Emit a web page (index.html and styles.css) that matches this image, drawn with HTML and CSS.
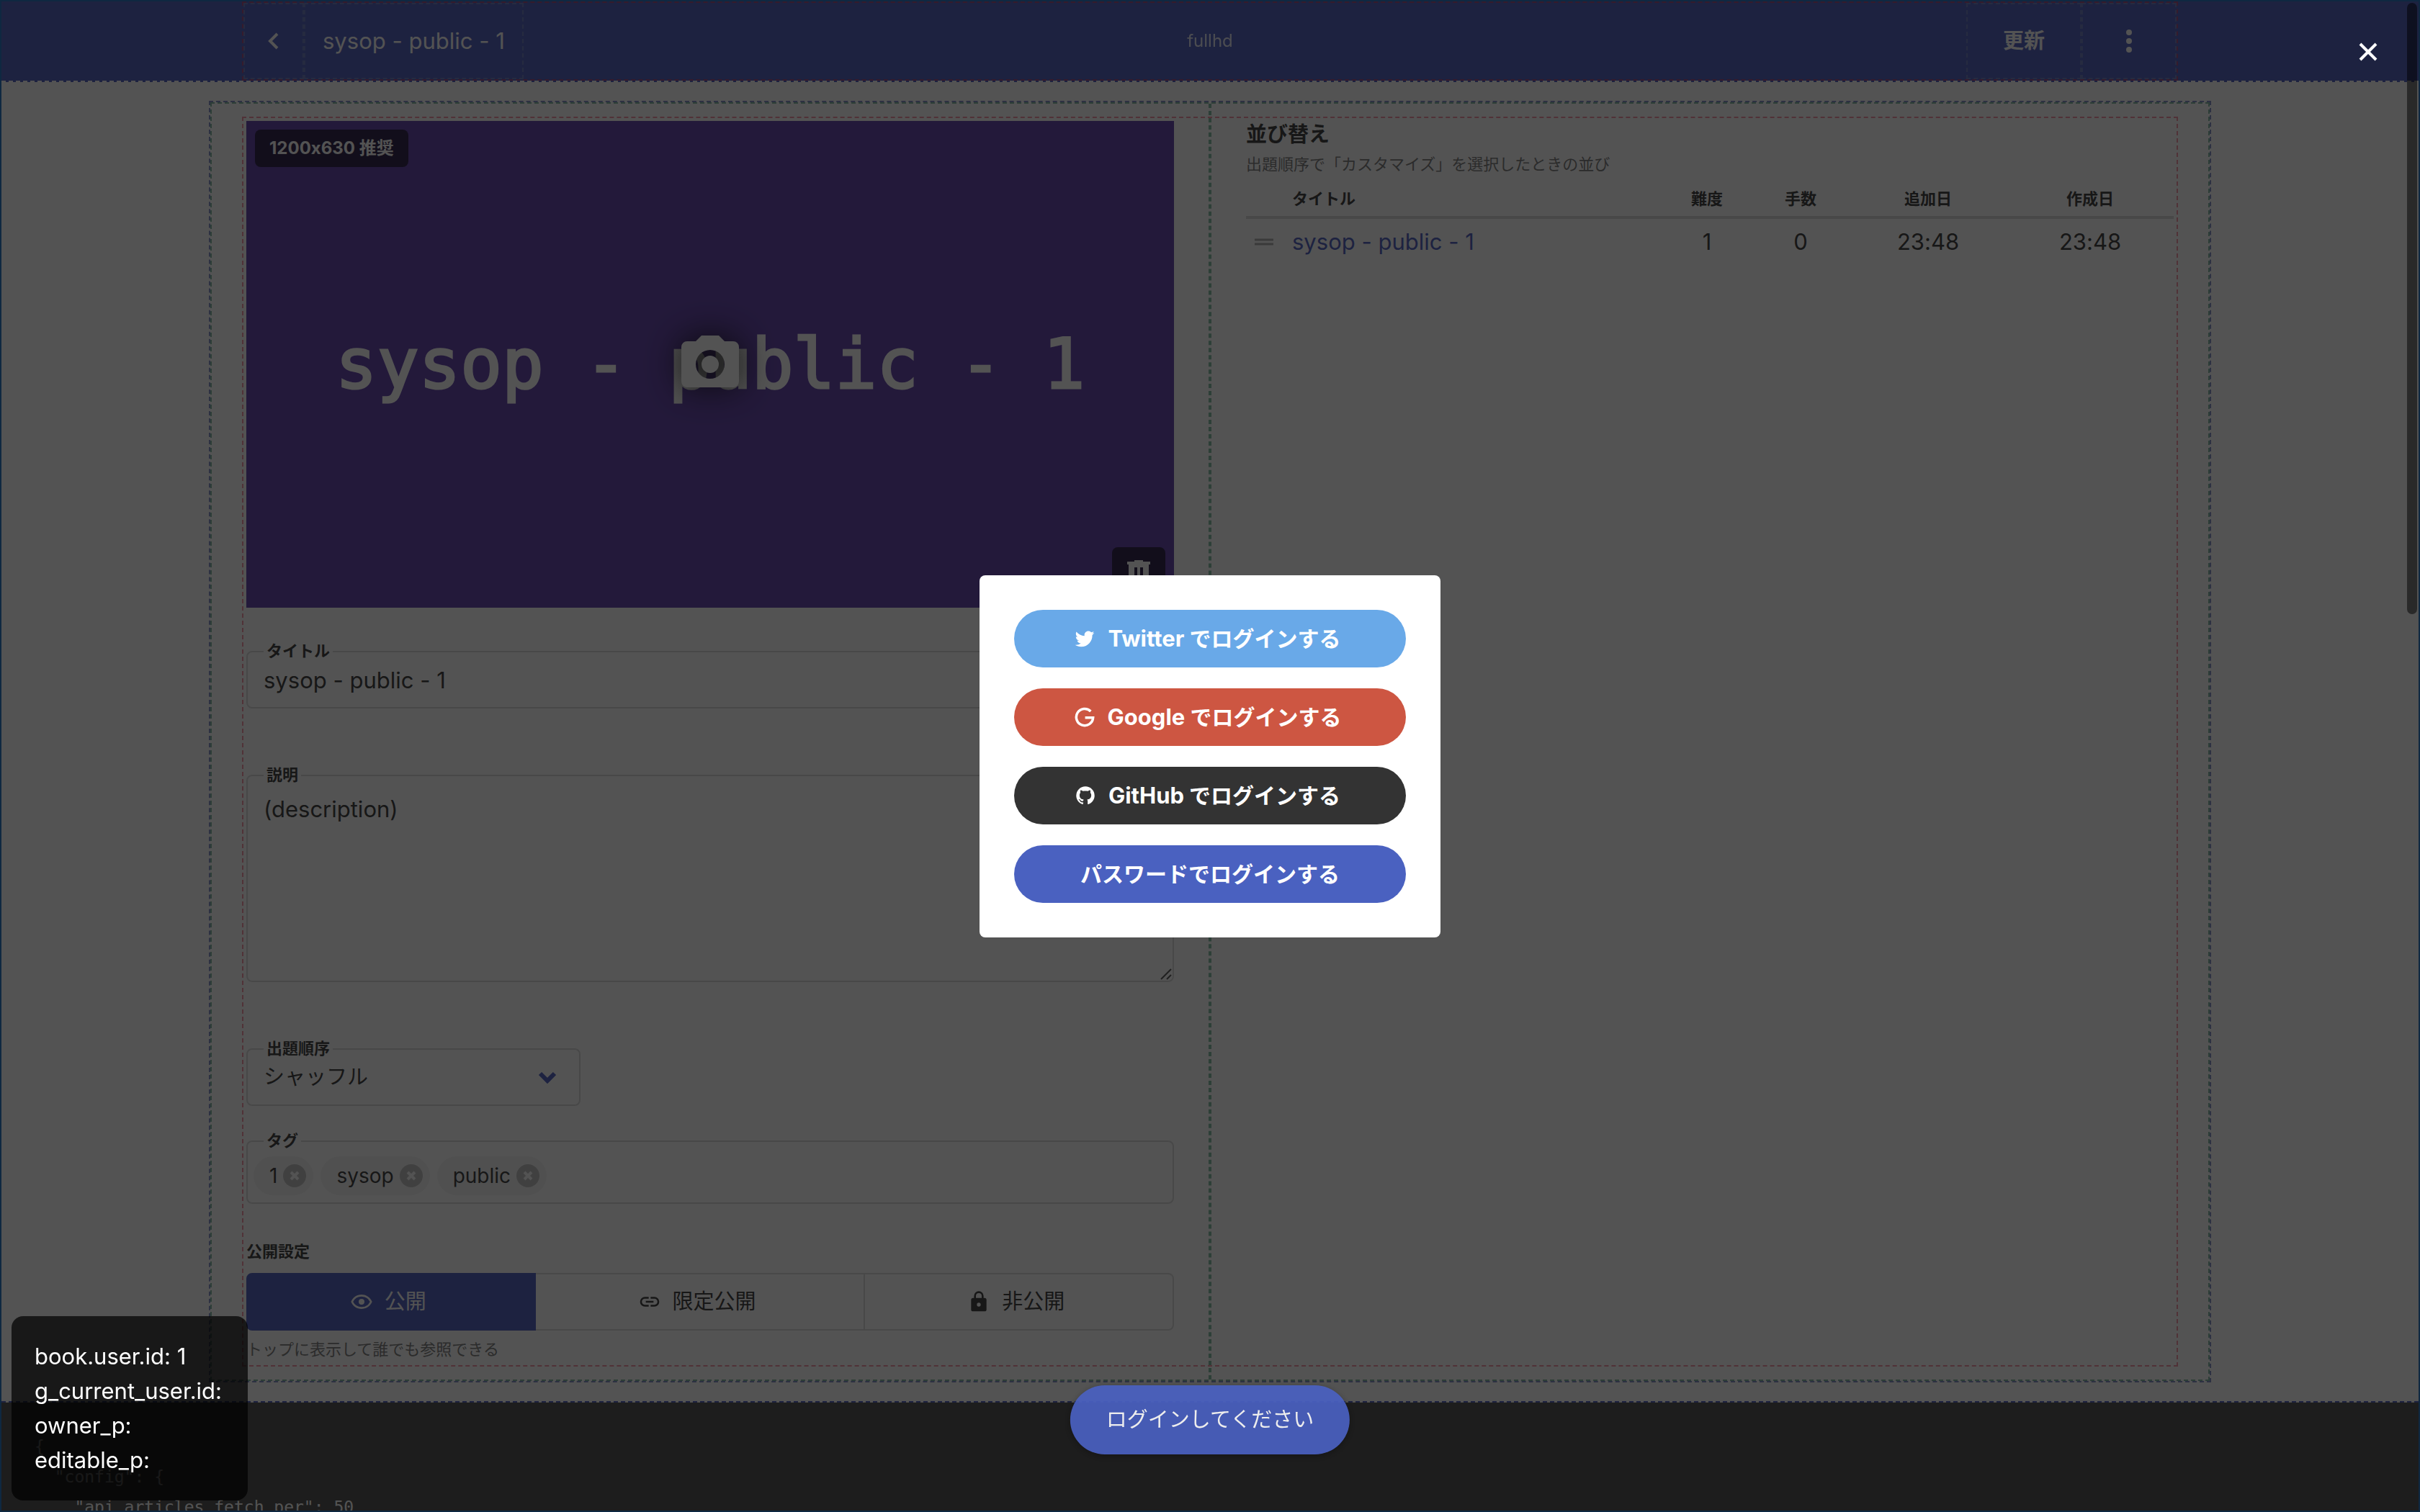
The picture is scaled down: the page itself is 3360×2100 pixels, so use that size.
FILE: index.html
```html
<!DOCTYPE html>
<html lang="ja">
<head>
<meta charset="utf-8">
<meta name="viewport" content="width=device-width, initial-scale=1">
<title>sysop - public - 1</title>
<link rel="stylesheet" href="styles.css">
</head>
<body>
<div class="page">
  <header class="navbar">
    <div class="navbar-inner">
      <div class="navbar-start">
        <a class="navbar-item navbar-back" href="#" aria-label="戻る">
          <svg class="icon-back" viewBox="0 0 20 28" aria-hidden="true"><path d="M15 4 5 14l10 10"/></svg>
        </a>
        <a class="navbar-item navbar-title" href="#">sysop - public - 1</a>
      </div>
      <span class="navbar-device">fullhd</span>
      <div class="navbar-end">
        <button class="navbar-item navbar-update" type="button">更新</button>
        <button class="navbar-item navbar-more" type="button" aria-label="メニュー">
          <svg class="icon-more" viewBox="0 0 8 32" aria-hidden="true"><circle cx="4" cy="4" r="4"/><circle cx="4" cy="16" r="4"/><circle cx="4" cy="28" r="4"/></svg>
        </button>
      </div>
    </div>
  </header>

  <main class="section">
    <div class="container">
      <div class="columns">
        <section class="column">
          <div class="cover">
            <span class="cover-size">1200x630 推奨</span>
            <span class="cover-title">sysop - public - 1</span>
            <button class="cover-camera" type="button" aria-label="画像を選択">
              <svg viewBox="2 2 20 18" aria-hidden="true"><path d="M4 4h3l2-2h6l2 2h3a2 2 0 0 1 2 2v12a2 2 0 0 1-2 2H4a2 2 0 0 1-2-2V6a2 2 0 0 1 2-2m8 3a5 5 0 0 0-5 5 5 5 0 0 0 5 5 5 5 0 0 0 5-5 5 5 0 0 0-5-5m0 2a3 3 0 0 1 3 3 3 3 0 0 1-3 3 3 3 0 0 1-3-3 3 3 0 0 1 3-3z"/></svg>
            </button>
            <button class="cover-delete" type="button" aria-label="削除">
              <svg viewBox="4 3 16 18" aria-hidden="true"><path d="M9 3v1H4v2h1v13a2 2 0 0 0 2 2h10a2 2 0 0 0 2-2V6h1V4h-5V3H9m0 5h2v9H9V8m4 0h2v9h-2V8z"/></svg>
            </button>
          </div>

          <div class="field field-title">
            <label class="label" for="title">タイトル</label>
            <input class="control" id="title" type="text" value="sysop - public - 1">
          </div>

          <div class="field field-description">
            <label class="label" for="description">説明</label>
            <textarea class="control control-area" id="description">(description)</textarea>
            <svg class="grip" viewBox="0 0 16 16" aria-hidden="true"><path d="M1 15 15 1M9 15l6-6"/></svg>
          </div>

          <div class="field field-order">
            <label class="label" for="order">出題順序</label>
            <select class="control control-select" id="order"><option>シャッフル</option></select>
            <svg class="chevron" viewBox="0 0 26 17" aria-hidden="true"><path d="M3 3l10 10L23 3"/></svg>
          </div>

          <div class="field field-tags">
            <span class="label">タグ</span>
            <div class="control control-tags">
              <span class="tag">1<button class="tag-delete" type="button" aria-label="1 を削除"><svg viewBox="0 0 32 32" aria-hidden="true"><path d="m11 11 10 10M21 11 11 21"/></svg></button></span>
              <span class="tag">sysop<button class="tag-delete" type="button" aria-label="sysop を削除"><svg viewBox="0 0 32 32" aria-hidden="true"><path d="m11 11 10 10M21 11 11 21"/></svg></button></span>
              <span class="tag">public<button class="tag-delete" type="button" aria-label="public を削除"><svg viewBox="0 0 32 32" aria-hidden="true"><path d="m11 11 10 10M21 11 11 21"/></svg></button></span>
            </div>
          </div>

          <fieldset class="visibility">
            <legend class="visibility-label">公開設定</legend>
            <div class="segments">
              <label class="segment">
                <input class="segment-input" type="radio" name="folder" checked>
                <svg class="icon" viewBox="0 0 24 24" aria-hidden="true"><path d="M12 9a3 3 0 0 1 3 3 3 3 0 0 1-3 3 3 3 0 0 1-3-3 3 3 0 0 1 3-3m0-4.500c5 0 9.270 3.110 11 7.500-1.730 4.390-6 7.500-11 7.500S2.730 16.390 1 12c1.730-4.390 6-7.500 11-7.500M3.180 12a9.821 9.821 0 0 0 17.640 0 9.821 9.821 0 0 0-17.640 0z"/></svg>
                公開
              </label>
              <label class="segment">
                <input class="segment-input" type="radio" name="folder">
                <svg class="icon" viewBox="0 0 24 24" aria-hidden="true"><path d="M3.900 12c0-1.710 1.390-3.100 3.100-3.100h4V7H7a5 5 0 0 0-5 5 5 5 0 0 0 5 5h4v-1.900H7c-1.710 0-3.100-1.390-3.100-3.100M8 13h8v-2H8v2m9-6h-4v1.900h4c1.710 0 3.100 1.390 3.100 3.100 0 1.710-1.390 3.100-3.100 3.100h-4V17h4a5 5 0 0 0 5-5 5 5 0 0 0-5-5z"/></svg>
                限定公開
              </label>
              <label class="segment">
                <input class="segment-input" type="radio" name="folder">
                <svg class="icon" viewBox="0 0 24 24" aria-hidden="true"><path d="M12 17a2 2 0 0 0 2-2 2 2 0 0 0-2-2 2 2 0 0 0-2 2 2 2 0 0 0 2 2m6-9a2 2 0 0 1 2 2v10a2 2 0 0 1-2 2H6a2 2 0 0 1-2-2V10a2 2 0 0 1 2-2h1V6a5 5 0 0 1 5-5 5 5 0 0 1 5 5v2h1m-6-5a3 3 0 0 0-3 3v2h6V6a3 3 0 0 0-3-3z"/></svg>
                非公開
              </label>
            </div>
            <p class="help">トップに表示して誰でも参照できる</p>
          </fieldset>
        </section>

        <section class="column column-sort">
          <h2 class="sort-title">並び替え</h2>
          <p class="help">出題順序で「カスタマイズ」を選択したときの並び</p>
          <table class="table">
            <thead>
              <tr><th class="col-handle"></th><th class="col-name">タイトル</th><th class="col-num">難度</th><th class="col-moves">手数</th><th class="col-date">追加日</th><th class="col-made">作成日</th></tr>
            </thead>
            <tbody>
              <tr>
                <td><svg class="handle" viewBox="0 0 26 10" aria-hidden="true"><path d="M0 2h26M0 8h26"/></svg></td>
                <td class="col-name"><a class="link" href="#">sysop - public - 1</a></td>
                <td>1</td><td>0</td><td>23:48</td><td>23:48</td>
              </tr>
            </tbody>
          </table>
        </section>
      </div>
    </div>
  </main>

  <pre class="dump">{
  "config": {
    "api_articles_fetch_per": 50</pre>
</div>

<div class="backdrop">
  <div class="dialog" role="dialog" aria-modal="true" aria-label="ログイン">
    <button class="login login-brand login-twitter" type="button">
      <svg class="login-icon" viewBox="1 2 22 20" aria-hidden="true"><path d="M22.460 6c-.77.350-1.600.580-2.460.690.880-.530 1.560-1.370 1.880-2.380-.83.500-1.750.850-2.720 1.050C18.370 4.500 17.260 4 16 4c-2.350 0-4.270 1.920-4.270 4.290 0 .340.040.670.110.980C8.280 9.090 5.110 7.380 3 4.790c-.37.630-.58 1.370-.58 2.150 0 1.490.750 2.810 1.910 3.560-.71 0-1.370-.2-1.950-.5v.030c0 2.080 1.480 3.820 3.440 4.210a4.220 4.220 0 0 1-1.930.070 4.280 4.280 0 0 0 4 2.980 8.521 8.521 0 0 1-5.330 1.840c-.34 0-.68-.02-1.020-.06C3.440 20.290 5.700 21 8.120 21 16 21 20.330 14.460 20.330 8.790c0-.19 0-.37-.01-.56.840-.6 1.560-1.360 2.140-2.230z"/></svg>
      <span><span class="brand">Twitter</span> でログインする</span>
    </button>
    <button class="login login-brand login-google" type="button">
      <svg class="login-icon login-icon-line" viewBox="0 0 24 24" aria-hidden="true"><path d="M19.200 5.100A10 10 0 1 0 22 12.600H12.500"/></svg>
      <span><span class="brand">Google</span> でログインする</span>
    </button>
    <button class="login login-brand login-github" type="button">
      <svg class="login-icon" viewBox="1 1 22 22" aria-hidden="true"><path d="M12 2A10 10 0 0 0 2 12c0 4.420 2.870 8.170 6.840 9.500.5.080.660-.23.660-.5v-1.690c-2.770.600-3.360-1.340-3.360-1.340-.46-1.160-1.110-1.470-1.110-1.470-.91-.62.070-.6.070-.6 1 .070 1.530 1.030 1.530 1.030.870 1.520 2.340 1.070 2.910.830.090-.65.350-1.090.630-1.340-2.220-.25-4.550-1.110-4.550-4.920 0-1.110.380-2 1.030-2.710-.1-.25-.45-1.290.1-2.640 0 0 .840-.27 2.750 1.020.790-.22 1.650-.33 2.500-.33s1.710.110 2.500.330c1.910-1.290 2.750-1.020 2.750-1.020.55 1.350.2 2.390.1 2.640.650.710 1.030 1.600 1.030 2.710 0 3.820-2.340 4.660-4.570 4.910.360.310.690.920.690 1.850V21c0 .270.160.590.670.500C19.140 20.160 22 16.420 22 12A10 10 0 0 0 12 2z"/></svg>
      <span><span class="brand">GitHub</span> でログインする</span>
    </button>
    <button class="login login-password" type="button">パスワードでログインする</button>
  </div>
  <button class="close" type="button" aria-label="閉じる"><svg viewBox="0 0 26 26" aria-hidden="true"><path d="m2 2 22 22M24 2 2 24"/></svg></button>
</div>

<aside class="debug">
  <div>book.user.id: 1</div>
  <div>g_current_user.id:</div>
  <div>owner_p:</div>
  <div>editable_p:</div>
</aside>
<div class="toast" role="status">ログインしてください</div>
<div class="scrollbar" aria-hidden="true"></div>
</body>
</html>
```
FILE: styles.css
```css
:root {
  --primary: #4a5bc0;
  --border: #dbdbdb;
  --text: #4a4a4a;
  --strong: #363636;
  --red: rgba(240, 70, 100, 0.6);
  --green: rgba(60, 150, 110, 0.65);
  --blue: rgba(60, 80, 170, 0.65);
  --font-latin: 31px;
  --font-ja: 29px;
  --font-small: 22px;
}

* { box-sizing: border-box; }

html, body {
  margin: 0;
  height: 100%;
  overflow: hidden;
}

body {
  font-family: Inter, "Noto Sans CJK JP", sans-serif;
  font-size: var(--font-latin);
  font-feature-settings: "calt" 0;
  line-height: 48px;
  color: var(--text);
  background: #fff;
}

button, input, select, textarea {
  font: inherit;
  color: inherit;
}

button {
  border: 0;
  padding: 0;
  background: none;
  cursor: pointer;
}

a { text-decoration: none; }
svg { display: block; fill: currentColor; }

/* Page frame */
.page {
  isolation: isolate;
  display: flex;
  flex-direction: column;
  height: 100%;
  overflow: hidden;
  border: 2px solid #1c6fc4;
}

/* Header */
.navbar {
  flex: none;
  color: #fff;
  background: var(--primary);
  border-bottom: 2px dashed #fff;
}

.navbar-inner {
  display: grid;
  grid-template-columns: 1fr auto 1fr;
  align-items: stretch;
  height: 110px;
  margin: 0 334px;
  border: 2px dashed rgba(220, 50, 70, 0.55);
}

.navbar-start, .navbar-end { display: flex; }
.navbar-end { justify-content: flex-end; }

.navbar-item {
  display: flex;
  align-items: center;
  justify-content: center;
  color: #fff;
  border: 2px dashed rgba(150, 165, 190, 0.4);
}

.navbar-back { width: 84px; }
.navbar-title { padding: 0 24px; }
.navbar-device { align-self: center; font-size: 24px; opacity: 0.85; }
.navbar-update { width: 160px; font-size: var(--font-ja); font-weight: 700; }
.navbar-more { width: 132px; }
.icon-back { width: 20px; fill: none; stroke: currentColor; stroke-width: 4; }
.icon-more { width: 8px; }

/* Main area */
.section {
  flex: none;
  padding: 26px 288px;
  border-bottom: 2px dashed var(--primary);
}

.container { border: 2px dashed var(--blue); }

.columns {
  position: relative;
  display: grid;
  grid-template-columns: 1fr 1fr;
  border: 2px dashed var(--green);
}

.columns::before {
  content: "";
  position: absolute;
  inset: 18px 42px;
  border: 2px dashed var(--red);
  pointer-events: none;
}

.column { padding: 24px 48px; min-width: 0; }
.column:first-child { border-right: 2px dashed var(--green); }

/* Cover picture */
.cover {
  position: relative;
  display: flex;
  align-items: center;
  justify-content: center;
  aspect-ratio: 1200 / 630;
  color: #fff;
  background: #5f3dab;
}

.cover-title {
  font-family: "DejaVu Sans Mono", monospace;
  font-size: 96px;
  line-height: 120px;
  -webkit-text-stroke: 3px #fff;
  white-space: nowrap;
}

.cover-size {
  position: absolute;
  top: 12px;
  left: 12px;
  padding: 2px 20px;
  font-size: 24px;
  font-weight: 700;
  color: #fff;
  background: rgba(0, 0, 0, 0.6);
  border-radius: 8px;
}

.cover-camera {
  position: absolute;
  inset: 0;
  display: flex;
  align-items: center;
  justify-content: center;
  padding-bottom: 8px;
  color: #fff;
}

.cover-camera svg { width: 80px; overflow: visible; filter: drop-shadow(0 0 24px #000); }

.cover-delete {
  position: absolute;
  right: 12px;
  bottom: 12px;
  display: flex;
  align-items: center;
  justify-content: center;
  width: 74px;
  height: 72px;
  color: #fff;
  background: rgba(0, 0, 0, 0.6);
  border-radius: 8px;
}

.cover-delete svg { width: 32px; }

/* Form fields */
.field { position: relative; }
.field-title { margin-top: 60px; }
.field-description { margin-top: 92px; }
.field-order { width: 464px; margin-top: 92px; }
.field-tags { margin-top: 48px; }

.label {
  position: absolute;
  top: -16px;
  left: 24px;
  z-index: 1;
  padding: 0 4px;
  font-size: var(--font-small);
  line-height: 32px;
  font-weight: 700;
  color: var(--strong);
  background: #fff;
}

.control {
  display: block;
  width: 100%;
  height: 80px;
  margin: 0;
  padding: 0 22px;
  color: var(--strong);
  background: #fff;
  border: 2px solid var(--border);
  border-radius: 8px;
}

.control-area { height: 288px; padding: 22px; resize: none; }
.control-select { appearance: none; font-size: var(--font-ja); }

.control-tags {
  display: flex;
  align-items: center;
  gap: 10px;
  height: 88px;
  padding: 10px 8px 0;
}

.grip {
  position: absolute;
  right: 3px;
  bottom: 3px;
  width: 16px;
  fill: none;
  stroke: #555;
  stroke-width: 2;
}

.chevron {
  position: absolute;
  top: 32px;
  right: 33px;
  width: 26px;
  fill: none;
  stroke: var(--primary);
  stroke-width: 6;
}

.tag {
  display: flex;
  align-items: center;
  gap: 8px;
  height: 54px;
  padding: 0 10px 0 22px;
  font-size: 28px;
  background: #f5f5f5;
  border-radius: 27px;
}

.tag-delete {
  width: 32px;
  height: 32px;
  color: #fff;
  background: #c0c0c0;
  border-radius: 50%;
}

.tag-delete svg { fill: none; stroke: currentColor; stroke-width: 4; }

/* Visibility */
.visibility {
  min-width: 0;
  margin: 48px 0 0;
  padding: 0;
  border: 0;
}

.visibility-label {
  padding: 0;
  font-size: var(--font-small);
  line-height: 36px;
  font-weight: 700;
  color: var(--strong);
}

.segments {
  display: flex;
  margin-top: 12px;
}

.segment {
  display: flex;
  flex: 1 1 auto;
  align-items: center;
  justify-content: center;
  gap: 16px;
  height: 80px;
  padding-right: 8px;
  font-size: var(--font-ja);
  color: var(--strong);
  border: 2px solid var(--border);
  border-left-width: 0;
}

.segment:first-child { border-left-width: 2px; border-radius: 8px 0 0 8px; }
.segment:last-child { border-radius: 0 8px 8px 0; }

.segment:has(.segment-input:checked) {
  color: #fff;
  background: var(--primary);
  border-color: var(--primary);
}

.segment-input { position: absolute; opacity: 0; }
.icon { width: 32px; }

.help {
  margin: 0;
  font-size: var(--font-small);
  line-height: 36px;
  color: #7a7a7a;
}

.visibility .help { margin-top: 8px; }

/* Sort list */
.column-sort {
  padding-top: 20px;
  border-left: 2px dashed var(--green);
}

.sort-title {
  margin: 0;
  font-size: var(--font-ja);
  line-height: 46px;
  font-weight: 700;
  color: var(--strong);
}

.table {
  width: 100%;
  table-layout: fixed;
  border-collapse: collapse;
  text-align: center;
  color: var(--strong);
}

.table th {
  height: 56px;
  padding: 6px 0 0;
  font-size: var(--font-small);
  line-height: 32px;
  border-bottom: 4px solid var(--border);
}

.table td { height: 66px; padding: 0; }
.table .col-name { text-align: left; }
.col-handle { width: 64px; }
.col-num { width: 124px; }
.col-moves { width: 136px; }
.col-date { width: 218px; }
.col-made { width: 232px; }
.link { color: var(--primary); }

.handle {
  width: 26px;
  margin-left: 12px;
  fill: none;
  stroke: #aaa;
  stroke-width: 3;
}

/* Data dump */
.dump {
  flex: 1;
  margin: 0;
  padding: 40px 46px 0;
  overflow: hidden;
  font-family: "DejaVu Sans Mono", monospace;
  font-size: 23px;
  line-height: 42px;
  color: #fff;
  background: var(--text);
}

/* Login dialog */
.backdrop {
  position: fixed;
  inset: 0;
  display: flex;
  align-items: center;
  justify-content: center;
  background: rgba(10, 10, 10, 0.7);
}

.dialog {
  display: grid;
  gap: 29px;
  width: 640px;
  padding: 48px;
  background: #fff;
  border-radius: 8px;
}

.login {
  display: flex;
  align-items: center;
  justify-content: center;
  gap: 18px;
  height: 80px;
  font-size: 30px;
  font-weight: 700;
  color: #fff;
  border-radius: 40px;
}

.login-brand { padding-right: 6px; }
.brand { font-size: var(--font-latin); }
.login-twitter { background: #69a9e8; }
.login-google { background: #cd5642; }
.login-github { background: #333; }
.login-password { background: #4a61c0; }
.login-icon { width: 28px; }
.login-icon-line { fill: none; stroke: currentColor; stroke-width: 3; }

.close {
  position: absolute;
  top: 59px;
  right: 59px;
  width: 26px;
  color: #fff;
}

.close svg { stroke: currentColor; stroke-width: 4; }

/* Floating pieces */
.debug {
  position: fixed;
  left: 16px;
  bottom: 16px;
  min-width: 328px;
  padding: 32px;
  color: #fff;
  background: rgba(0, 0, 0, 0.7);
  border-radius: 16px;
}

.toast {
  position: fixed;
  bottom: 80px;
  left: 50%;
  padding: 24px 50px;
  font-size: var(--font-ja);
  color: #fff;
  background: #4a61c2;
  border-radius: 48px;
  box-shadow: 0 2px 8px rgba(0, 0, 0, 0.3);
  opacity: 0.92;
  transform: translateX(-50%);
}

.scrollbar {
  position: fixed;
  top: 4px;
  right: 4px;
  width: 14px;
  height: 849px;
  background: rgba(0, 0, 0, 0.5);
  border-radius: 7px;
}
```
